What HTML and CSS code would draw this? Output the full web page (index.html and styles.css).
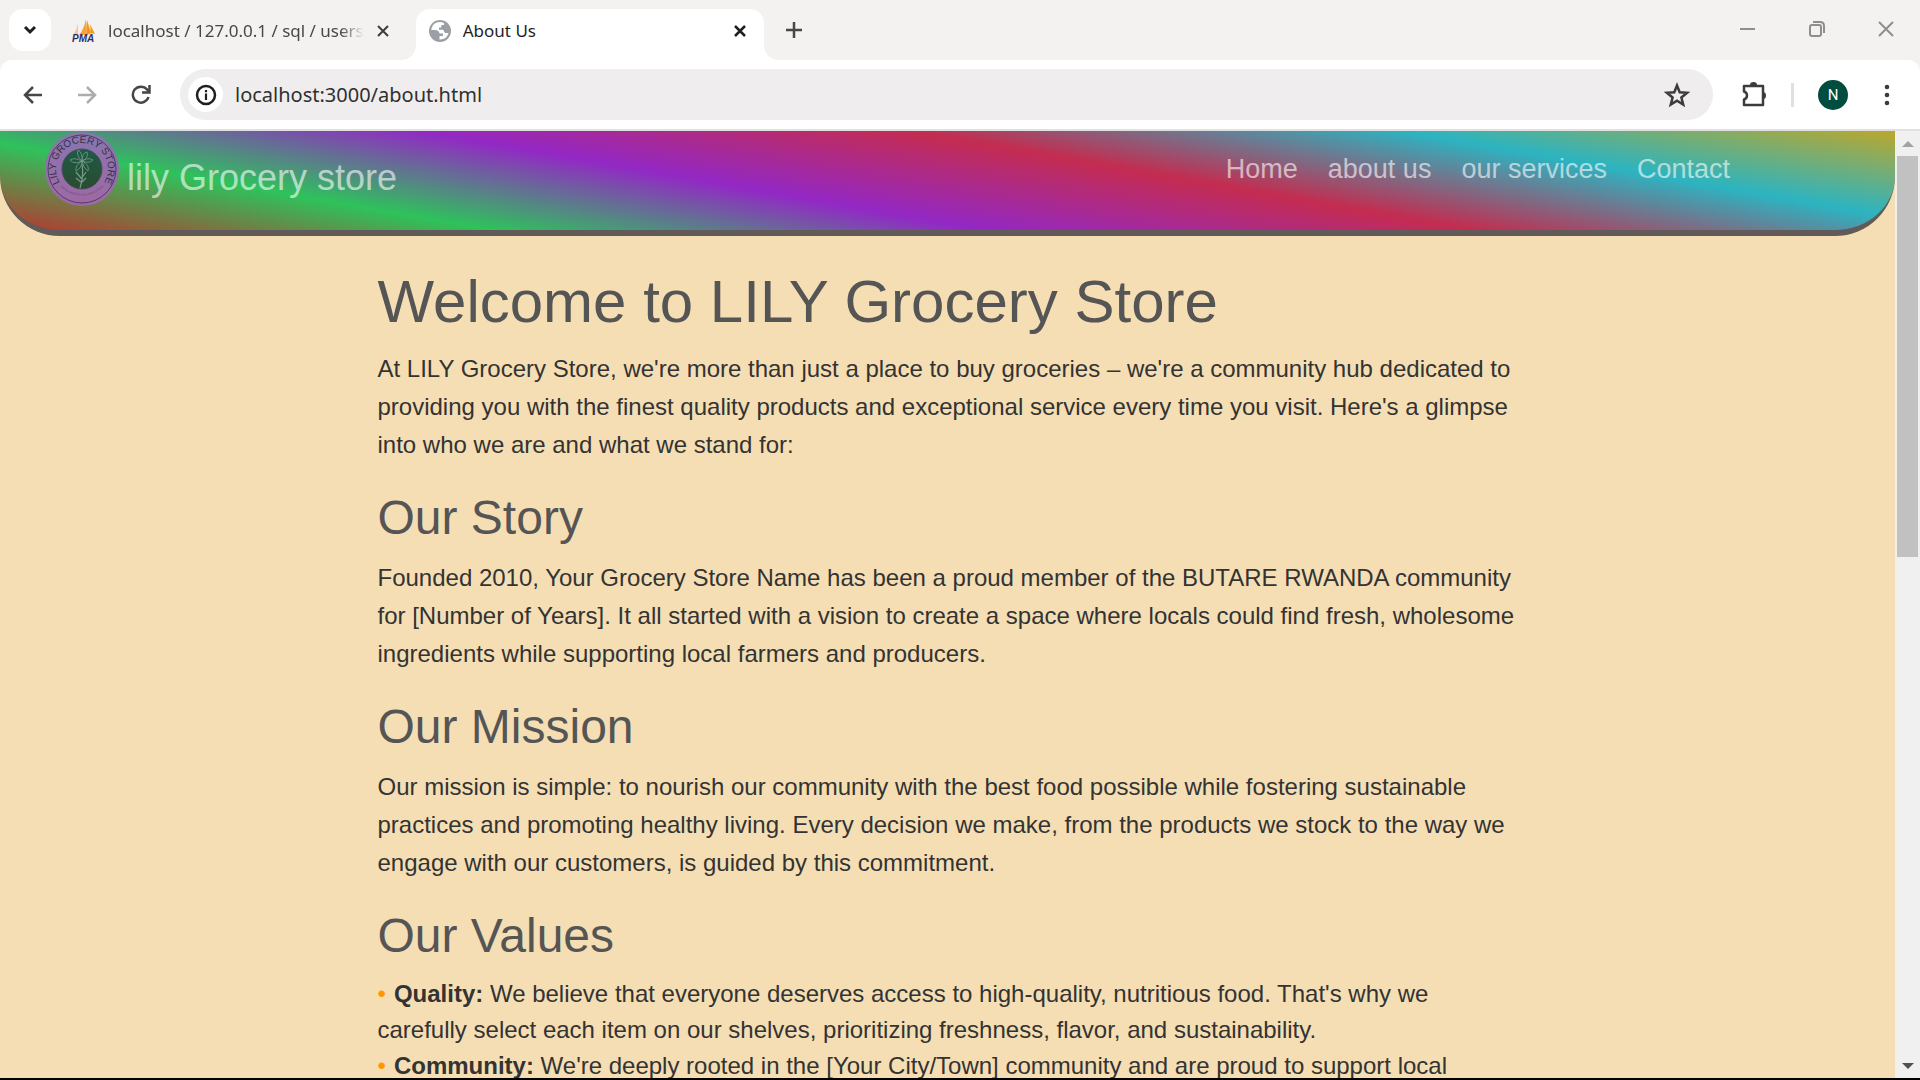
FILE: index.html
```html
<!DOCTYPE html>
<html lang="en">
<head>
<meta charset="utf-8">
<meta name="viewport" content="width=device-width, initial-scale=1">
<title>About Us</title>
<link rel="stylesheet" href="styles.css">
</head>
<body>
<div class="tab-strip">
  <button class="tab-search" aria-label="Search tabs">
    <svg width="14" height="10" viewBox="0 0 14 10"><path d="M2 2l5 5 5-5" fill="none" stroke="#1f1f1f" stroke-width="3"/></svg>
  </button>
  <div class="tab">
    <svg class="pma-icon" width="24" height="24" viewBox="0 0 24 24">
      <path d="M6 3Q5 11 1 16h5z" fill="#fbc88c"/><path d="M14 0Q12 10 7 16h8z" fill="#f9a13a"/><path d="M15 1q-1 8 0 15l4-2z" fill="#f7941d"/><path d="M18 5q1 5 0 9l5 1z" fill="#f89c0e"/>
      <text x="0" y="23" class="pma">PMA</text>
    </svg>
    <span class="tab-title faded">localhost / 127.0.0.1 / sql / users</span>
    <button class="close" aria-label="Close tab"><svg width="14" height="14" viewBox="0 0 14 14"><path d="M2 2l10 10M12 2L2 12" stroke="#3c3c3c" stroke-width="2"/></svg></button>
  </div>
  <div class="tab active">
    <svg width="22" height="22" viewBox="0 0 22 22">
      <circle cx="11" cy="11" r="11" fill="#9aa0a6"/>
      <path d="M13 2.300Q5 1 2.500 8.500L2.300 10H6q4 0 4.500 3.500h3.500v2.500h-3.500v3.500q7 .5 9-6.500h-3.500l-2-3.500H10V7.500h2.500V5H15V3z" fill="#fff"/>
      <path d="M15 3v2.200h-2.500V8H10v1.500h4.500l2 3.500H20q.5-7-5-10z" fill="#9aa0a6"/>
    </svg>
    <span class="tab-title">About Us</span>
    <button class="close" aria-label="Close tab"><svg width="14" height="14" viewBox="0 0 14 14"><path d="M2 2l10 10M12 2L2 12" stroke="#1f1f1f" stroke-width="2.500"/></svg></button>
  </div>
  <button class="new-tab" aria-label="New tab"><svg width="16" height="16" viewBox="0 0 16 16"><path d="M8 0v16M0 8h16" stroke="#474747" stroke-width="2.500"/></svg></button>
  <div class="window-controls">
    <button aria-label="Minimize"><svg width="16" height="16" viewBox="0 0 16 16"><path d="M0 8h15" stroke="#8f8e8d" stroke-width="2"/></svg></button>
    <button aria-label="Restore"><svg width="16" height="16" viewBox="0 0 16 16" fill="none" stroke="#8f8e8d" stroke-width="2"><rect x="1" y="4" width="11" height="11" rx="2"/><path d="M4 1h7q4 0 4 4v7"/></svg></button>
    <button aria-label="Close"><svg width="16" height="16" viewBox="0 0 16 16"><path d="M1 1l14 14M15 1L1 15" stroke="#8f8e8d" stroke-width="2"/></svg></button>
  </div>
</div>

<div class="toolbar">
  <button class="tool" aria-label="Back"><svg width="20" height="20" viewBox="0 0 20 20"><path d="M19 10H2M10 2l-8 8 8 8" fill="none" stroke="#474747" stroke-width="2.500"/></svg></button>
  <button class="tool" aria-label="Forward"><svg width="20" height="20" viewBox="0 0 20 20"><path d="M1 10h17M10 2l8 8-8 8" fill="none" stroke="#adadad" stroke-width="2.500"/></svg></button>
  <button class="tool" aria-label="Reload"><svg width="20" height="20" viewBox="0 0 20 20"><path d="M17.500 12A8 8 0 1 1 16 4.500l2 2M18.500 0v7.500H11" fill="none" stroke="#474747" stroke-width="2.500"/></svg></button>
  <div class="omnibox">
    <button class="site-info" aria-label="Site information"><svg width="22" height="22" viewBox="0 0 22 22"><circle cx="11" cy="11" r="9" fill="none" stroke="#1f1f1f" stroke-width="2.500"/><path d="M11 9.500V16M11 6v2.200" stroke="#1f1f1f" stroke-width="2.200"/></svg></button>
    <input class="url" type="text" aria-label="Address" value="localhost:3000/about.html">
    <button class="star" aria-label="Bookmark this page"><svg width="26" height="26" viewBox="0 0 26 26"><path d="M13 3.500l2.700 6.800 7.300.5-5.600 4.700 1.800 7.100-6.200-3.900-6.200 3.900 1.800-7.100L3 10.800l7.300-.5z" fill="none" stroke="#3c3c3c" stroke-width="2.500"/></svg></button>
  </div>
  <button class="extensions" aria-label="Extensions"><svg width="26" height="26" viewBox="0 0 26 26"><path d="M3 4h19v19H3v-5.500q3-1 3-4T3 9.500z" fill="none" stroke="#3c3c3c" stroke-width="2.500" stroke-linejoin="round"/><path d="M9 3a3.500 3 0 0 1 7 0zM22 10a3 3.500 0 0 1 0 7z" fill="#3c3c3c"/></svg></button>
  <span class="divider"></span>
  <button class="avatar" aria-label="Profile">N</button>
  <button class="menu" aria-label="Menu"><svg width="6" height="22" viewBox="0 0 6 22" fill="#3c3c3c"><circle cx="3" cy="3" r="2.300"/><circle cx="3" cy="11" r="2.300"/><circle cx="3" cy="19" r="2.300"/></svg></button>
</div>

<div class="viewport">
  <div class="page">
    <header class="site-header">
      <div class="brand">
        <svg class="logo" width="74" height="74" viewBox="0 0 74 74">
          <defs>
            <linearGradient id="disc" x2="0" y2="1"><stop offset="0" stop-color="#8876ae"/><stop offset="1" stop-color="#9f68a4"/></linearGradient>
            <linearGradient id="core" x2="0" y2="1"><stop offset="0" stop-color="#1e5a46"/><stop offset="1" stop-color="#2a4c30"/></linearGradient>
            <path id="arc" d="M18.600 55.400A26 26 0 1 1 55.400 55.400"/>
            <path id="low" d="M14 53A30 30 0 0 0 60 53"/>
          </defs>
          <circle cx="37" cy="37" r="37" fill="url(#disc)"/>
          <circle cx="37" cy="37" r="34" fill="none" stroke="#4d3f68"/>
          <circle cx="37" cy="37" r="20" fill="url(#core)" stroke="#4c4a64"/>
          <text class="ring-text"><textPath href="#arc" startOffset="50%" text-anchor="middle">LILY GROCERY STORE</textPath></text>
          <text class="ring-small"><textPath href="#low" startOffset="50%" text-anchor="middle">USING NIGERS IN EVERY STORE</textPath></text>
          <g fill="none" stroke="#749d88" stroke-width=".8">
            <path d="M37 29q-6-5-4-11 5 3 4 11zM37 29q0-8 5-9 2 6-5 9zM37 29q6-4 11-1-4 4-11 1zM37 29q-8-4-12-1 4 5 12 1zM37 29q-7 4-6 10 6-3 6-10zM37 29q1 7 6 10 2-6-6-10z"/>
            <path d="M37 32q2 12-2 24M36 46l-5-6M36 47l5-7M36 50l-5-4M36 51l5-5" stroke-width="1.200"/>
          </g>
        </svg>
        <span class="brand-name">lily Grocery store</span>
      </div>
      <nav class="nav">
        <a href="#home">Home</a>
        <a href="#about">about us</a>
        <a href="#services">our services</a>
        <a href="#contact">Contact</a>
      </nav>
    </header>
    <main class="content">
      <h1>Welcome to LILY Grocery Store</h1>
      <p>At LILY Grocery Store, we're more than just a place to buy groceries – we're a community hub dedicated to providing you with the finest quality products and exceptional service every time you visit. Here's a glimpse into who we are and what we stand for:</p>
      <h2>Our Story</h2>
      <p>Founded 2010, Your Grocery Store Name has been a proud member of the BUTARE RWANDA community for [Number of Years]. It all started with a vision to create a space where locals could find fresh, wholesome ingredients while supporting local farmers and producers.</p>
      <h2>Our Mission</h2>
      <p>Our mission is simple: to nourish our community with the best food possible while fostering sustainable practices and promoting healthy living. Every decision we make, from the products we stock to the way we engage with our customers, is guided by this commitment.</p>
      <h2>Our Values</h2>
      <ul>
        <li><strong>Quality:</strong> We believe that everyone deserves access to high-quality, nutritious food. That's why we carefully select each item on our shelves, prioritizing freshness, flavor, and sustainability.</li>
        <li><strong>Community:</strong> We're deeply rooted in the [Your City/Town] community and are proud to support local</li>
      </ul>
    </main>
  </div>
  <div class="scrollbar" aria-hidden="true">
    <svg width="12" height="6" viewBox="0 0 12 6"><path d="M0 6l6-6 6 6z" fill="#a3a3a3"/></svg>
    <div class="track"><div class="thumb"></div></div>
    <svg width="12" height="6" viewBox="0 0 12 6"><path d="M0 0l6 6 6-6z" fill="#505050"/></svg>
  </div>
</div>
</body>
</html>
```
FILE: styles.css
```css
* {
  box-sizing: border-box;
}

body {
  margin: 0;
  height: 100vh;
  display: flex;
  flex-direction: column;
  overflow: hidden;
  background: #f3f2f0;
  border-bottom: 2px solid #000;
  font-family: "Liberation Sans", Arial, sans-serif;
}

button {
  display: flex;
  align-items: center;
  justify-content: center;
  flex: none;
  padding: 0;
  border: 0;
  background: none;
}

svg {
  display: block;
  flex: none;
}

/* Tab strip */
.tab-strip {
  display: flex;
  flex: none;
  height: 60px;
  padding: 9px 12px 0 9px;
  font-family: "Noto Sans", "Open Sans", sans-serif;
}

.tab-search {
  width: 42px;
  height: 42px;
  border-radius: 14px;
  background: #fff;
}

.tab {
  display: flex;
  align-items: center;
  flex: 0 1 348px;
  height: 51px;
  padding: 0 17px 8px 13px;
  gap: 12px;
  position: relative;
}

.tab-search + .tab {
  margin-left: 8px;
  padding-right: 26px;
  flex-basis: 358px;
}

.tab.active {
  background: #fff;
  border-radius: 14px 14px 0 0;
}

.tab-search + .tab {
  flex-basis: 358px;
  margin-right: -14px;
  padding-right: 40px;
}

.tab.active::before,
.tab.active::after {
  content: "";
  position: absolute;
  bottom: 0;
  width: 15px;
  height: 15px;
}

.tab.active::before {
  right: 100%;
  background: radial-gradient(circle at 0 0, #f3f2f0 15px, #fff 15px);
}

.tab.active::after {
  left: 100%;
  background: radial-gradient(circle at 100% 0, #f3f2f0 15px, #fff 15px);
}

.tab-title {
  flex: 1;
  min-width: 0;
  overflow: hidden;
  white-space: nowrap;
  font-size: 17px;
  line-height: 26px;
  color: #1f1f1f;
}

.faded {
  color: #474747;
  mask-image: linear-gradient(to left, transparent, #000 24px);
}

.close {
  width: 14px;
  height: 42px;
}

.pma-icon {
  overflow: visible;
}

.pma {
  font: italic bold 10px "Liberation Sans", sans-serif;
  fill: #2e2f66;
}

.new-tab {
  width: 42px;
  height: 42px;
  margin-left: 9px;
}

.window-controls {
  display: flex;
  margin-left: auto;
  gap: 24px;
}

.window-controls button {
  width: 45px;
  height: 40px;
}

/* Toolbar */
.toolbar {
  display: flex;
  align-items: center;
  flex: none;
  height: 71px;
  padding: 0 23px 0 12px;
  background: #fff;
  border-bottom: 2px solid #e0e0e0;
  border-radius: 12px 12px 0 0;
  font-family: "Noto Sans", "Open Sans", sans-serif;
}

.tool {
  width: 42px;
  height: 42px;
  margin-right: 12px;
}

.omnibox {
  display: flex;
  align-items: center;
  flex: 1;
  height: 51px;
  margin-left: 6px;
  padding: 0 23px 0 8px;
  border-radius: 26px;
  background: #efedee;
}

.site-info {
  width: 35px;
  height: 35px;
  border-radius: 50%;
  background: #fff;
}

.url {
  flex: 1;
  min-width: 0;
  margin-left: 12px;
  padding: 0;
  border: 0;
  outline: 0;
  background: none;
  font: 20px "Noto Sans", "Open Sans", sans-serif;
  color: #303030;
}

.extensions {
  margin-left: 28px;
}

.divider {
  width: 3px;
  height: 24px;
  margin: 0 24px;
  background: #e0e0e0;
}

.avatar {
  width: 30px;
  height: 30px;
  border-radius: 50%;
  background: #004d40;
  color: #fff;
  font: 15px Roboto, sans-serif;
}

.menu {
  width: 20px;
  height: 42px;
  margin-left: 29px;
}

/* Page */
.viewport {
  display: flex;
  flex: 1;
  min-height: 0;
}

.page {
  flex: 1;
  min-width: 0;
  overflow: hidden;
  background: #f5deb3;
  color: #333;
}

.site-header {
  display: flex;
  justify-content: space-between;
  align-items: center;
  padding: 1px 165px 24px 45px;
  border-bottom: 6px solid #615a58;
  border-radius: 0 0 60px 60px;
  background: linear-gradient(10deg, #b8352f, #2ec25b, #9328c5, #c42c50, #2cb4c1, #bba72c);
  color: rgba(255, 255, 255, 0.6);
}

.brand {
  display: flex;
  align-items: center;
  gap: 8px;
}

.brand-name {
  padding-top: 18px;
  font-size: 36px;
  line-height: 42px;
}

.ring-text {
  font-size: 10px;
  fill: #35304e;
}

.ring-small {
  font-size: 3px;
  fill: #5d4a77;
}

.nav {
  display: flex;
  gap: 30px;
}

.nav a {
  font-size: 27px;
  line-height: 32px;
  color: inherit;
  text-decoration: none;
}

.content {
  max-width: 1140px;
  margin: 0 auto;
  padding-top: 30px;
}

h1,
h2 {
  margin: 0;
  color: #555;
  font-weight: 400;
}

h1 {
  font-size: 60px;
  line-height: 72px;
  margin-bottom: 12px;
}

h2 {
  font-size: 48px;
  line-height: 58px;
  margin-bottom: 12px;
}

p {
  margin: 0 0 25px;
  font-size: 24px;
  line-height: 38px;
}

ul {
  margin: -1px 0 0;
  padding: 0;
  list-style: none;
  font-size: 24px;
  line-height: 36px;
}

li::before {
  content: "•";
  margin-right: 8px;
  color: #ff9800;
}

/* Scrollbar */
.scrollbar {
  display: flex;
  flex-direction: column;
  align-items: center;
  flex: none;
  width: 25px;
  padding: 10px 0 9px;
  background: #f0f0f0;
}

.track {
  flex: 1;
  width: 21px;
  padding: 9px 0 15px;
}

.thumb {
  height: 45%;
  background: #c1c1c1;
}
```
